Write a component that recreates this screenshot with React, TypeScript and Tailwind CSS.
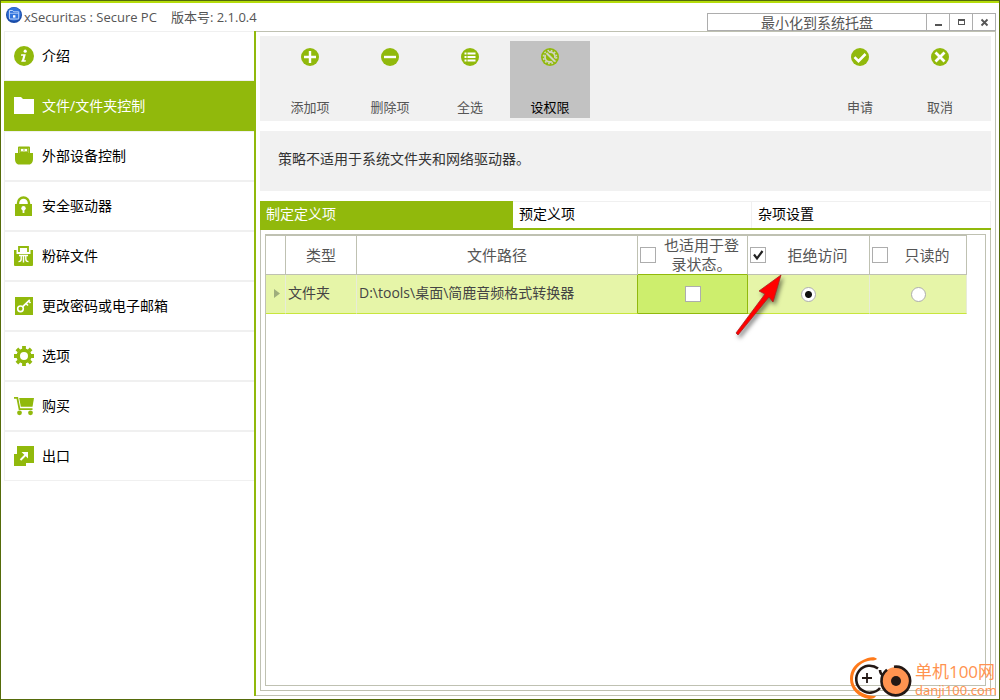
import React, { useState } from 'react';

interface MenuItem {
  label: string;
  icon: React.ReactNode;
}

interface ToolButtonProps {
  label: string;
  icon: React.ReactNode;
  active?: boolean;
}

interface CheckBoxProps {
  id?: string;
  label?: string;
  checked: boolean;
  onChange: (checked: boolean) => void;
}

const GREEN = '#91b90c';

const menuItems: MenuItem[] = [
  {
    label: '介绍',
    icon: (
      <>
        <circle cx="10" cy="10" r="10" fill={GREEN} />
        <circle cx="11.2" cy="5.2" r="1.6" fill="#fff" />
        <path d="M7.2 8.2h4.6l-1.6 6h1.8l-.4 1.6H7.2l.4-1.6h.4l1.2-4.4H6.9z" fill="#fff" />
      </>
    ),
  },
  {
    label: '文件/文件夹控制',
    icon: <path d="M0 1h7l2 2h11v15H0z" fill="#fff" />,
  },
  {
    label: '外部设备控制',
    icon: (
      <>
        <path d="M4 1.500a1 1 0 0 1 1-1h10a1 1 0 0 1 1 1V7h3v6c0 3-1.500 5.500-4 5.500H5C2.500 18.500 1 16 1 13V7h3z" fill={GREEN} />
        <path d="M5.500 2h9v5h-9z" fill="#fff" />
        <path d="M6.500 2H9v3.500H6.500zM11 2h2.500v3.500H11z" fill={GREEN} />
        <path d="M7 2.500h2.500V5H7zM10.500 2.500H13V5h-2.500z" fill="#fff" />
        <path d="M5.500 2h9v.7h-9zM5.500 5.800h9V7h-9zM9.600 2h.8v5h-.8zM5.500 2h1.200v5H5.500zM13.300 2h1.200v5h-1.200z" fill={GREEN} />
      </>
    ),
  },
  {
    label: '安全驱动器',
    icon: (
      <>
        <path d="M4 9V7a5.500 5.500 0 0 1 11 0v2" fill="none" stroke={GREEN} strokeWidth="2.400" />
        <path d="M1 8h17v12H1z" fill={GREEN} />
        <circle cx="9.500" cy="12.200" r="2.200" fill="#fff" />
        <path d="M8.600 13h1.800v4H8.600z" fill="#fff" />
      </>
    ),
  },
  {
    label: '粉碎文件',
    icon: (
      <>
        <path d="M0 4h2.500v4h14V4H19v15a1 1 0 0 1-1 1H1a1 1 0 0 1-1-1z" fill={GREEN} />
        <path d="M5 6V1h9v5" fill="none" stroke={GREEN} strokeWidth="1.800" />
        <path d="M5 9.500h9M7.200 10v3c0 1.800-.8 2.600-2.700 2.600M9.500 10v6.500M11.800 10v3c0 1.800.8 2.600 2.700 2.600" fill="none" stroke="#fff" strokeWidth="1.400" />
      </>
    ),
  },
  {
    label: '更改密码或电子邮箱',
    icon: (
      <>
        <path d="M1 1h18v18H1z" fill={GREEN} />
        <circle cx="6.500" cy="12.800" r="2.800" fill="none" stroke="#fff" strokeWidth="1.600" />
        <path d="M8.500 10.800 15.800 3.800M12 7.500l2 2M14.500 5l2 2" fill="none" stroke="#fff" strokeWidth="1.700" />
      </>
    ),
  },
  {
    label: '选项',
    icon: (
      <>
        <circle cx="10" cy="10" r="5.800" fill="none" stroke={GREEN} strokeWidth="3.600" />
        <path
          d="M10 0v3M10 17v3M0 10h3M17 10h3M2.900 2.900 5 5M15 15l2.100 2.100M2.900 17.100 5 15M15 5l2.100-2.100"
          stroke={GREEN}
          strokeWidth="3.800"
        />
      </>
    ),
  },
  {
    label: '购买',
    icon: (
      <>
        <path d="M0 1.800h3.300l2.200 11.400h13" fill="none" stroke={GREEN} strokeWidth="1.800" />
        <path d="M5.200 2H20l-1.500 8.800H6.800z" fill={GREEN} />
        <circle cx="5.500" cy="16.800" r="2.400" fill={GREEN} />
        <circle cx="16.500" cy="16.800" r="2.400" fill={GREEN} />
      </>
    ),
  },
  {
    label: '出口',
    icon: (
      <>
        <path d="M3 0h17v17h-8v3H0V8h3z" fill={GREEN} />
        <path d="M6.500 14 12.500 8" stroke="#fff" strokeWidth="2" />
        <path d="M7.500 6H14v6.500l-2-2-2.500-2.500z" fill="#fff" />
      </>
    ),
  },
];

const AddIcon = () => (
  <svg viewBox="0 0 18 18" className="h-[18px] w-[18px]" aria-hidden="true">
    <circle cx="9" cy="9" r="9" fill={GREEN} />
    <path d="M9 3v12M3 9h12" stroke="#fff" strokeWidth="2.400" />
  </svg>
);

const RemoveIcon = () => (
  <svg viewBox="0 0 18 18" className="h-[18px] w-[18px]" aria-hidden="true">
    <circle cx="9" cy="9" r="9" fill={GREEN} />
    <path d="M3 9h12" stroke="#fff" strokeWidth="2.400" />
  </svg>
);

const ListIcon = () => (
  <svg viewBox="0 0 18 18" className="h-[18px] w-[18px]" aria-hidden="true">
    <circle cx="9" cy="9" r="9" fill={GREEN} />
    <path d="M3.500 5.500h2M3.500 9h2M3.500 12.500h2M6.500 5.500h8M6.500 9h8M6.500 12.500h8" stroke="#fff" strokeWidth="1.800" />
  </svg>
);

const PermissionIcon = () => (
  <svg viewBox="0 0 18 18" className="h-[18px] w-[18px]" aria-hidden="true">
    <circle cx="9" cy="9" r="9" fill={GREEN} />
    <circle cx="9" cy="9" r="5" fill="none" stroke="#d0d4c0" strokeWidth="1.800" />
    <circle cx="9" cy="9" r="6.500" fill="none" stroke="#d0d4c0" strokeWidth="1.700" strokeDasharray="1.700 1.700" />
    <path d="m5 4.500 9 9" stroke={GREEN} strokeWidth="4" />
    <path d="m5.500 5 8.500 8.500" stroke="#d0d4c0" strokeWidth="2" />
  </svg>
);

const ApplyIcon = () => (
  <svg viewBox="0 0 18 18" className="h-[18px] w-[18px]" aria-hidden="true">
    <circle cx="9" cy="9" r="9" fill={GREEN} />
    <path d="m3.500 9.200 4 4L14.500 6" fill="none" stroke="#fff" strokeWidth="2.600" />
  </svg>
);

const CancelIcon = () => (
  <svg viewBox="0 0 18 18" className="h-[18px] w-[18px]" aria-hidden="true">
    <circle cx="9" cy="9" r="9" fill={GREEN} />
    <path d="m4.500 4.500 9 9M13.500 4.500l-9 9" stroke="#fff" strokeWidth="2.800" />
  </svg>
);

const AppLogo = () => (
  <svg viewBox="0 0 16 16" className="h-4 w-4" aria-hidden="true">
    <circle cx="8" cy="8" r="8" fill="#1b4da8" />
    <circle cx="8" cy="7" r="6.800" fill="#3273dc" />
    <path d="M3.500 3.500h3.200l1 1.300h5V12H3.500z" fill="#3273dc" stroke="#b9d2fb" strokeWidth="1" />
    <path d="M4 6.300h8.500" stroke="#b9d2fb" strokeWidth="0.800" />
    <path d="M7 8.200h2.400v2.400H7z" fill="#fff" />
  </svg>
);

const ToolButton: React.FC<ToolButtonProps> = ({ label, icon, active = false }) => (
  <button
    type="button"
    className={`flex h-[77px] w-20 flex-col items-center justify-between pt-[7px] pb-px text-[13px] leading-5 ${
      active ? 'bg-[#c2c2c2] text-black' : 'text-[#555]'
    }`}
  >
    {icon}
    <span>{label}</span>
  </button>
);

const CheckBox: React.FC<CheckBoxProps> = ({ id, label, checked, onChange }) => (
  <span className="inline-grid shrink-0 place-items-center align-middle">
    <input
      id={id}
      type="checkbox"
      aria-label={label}
      checked={checked}
      onChange={(e) => onChange(e.target.checked)}
      className="col-start-1 row-start-1 h-4 w-4 appearance-none border border-[#adadad] bg-white"
    />
    {checked && (
      <svg viewBox="0 0 16 16" className="pointer-events-none col-start-1 row-start-1 h-4 w-4" aria-hidden="true">
        <path d="m4 7.500 3 4L12.500 4" fill="none" stroke="#222" strokeWidth="2.200" />
      </svg>
    )}
  </span>
);

const App: React.FC = () => {
  const [selected, setSelected] = useState(1);
  const [loginAll, setLoginAll] = useState(false);
  const [denyAll, setDenyAll] = useState(true);
  const [readAll, setReadAll] = useState(false);
  const [login, setLogin] = useState(false);
  const [access, setAccess] = useState('deny');

  const radioClass =
    'h-[15px] w-[15px] appearance-none rounded-full border border-[#adadad] bg-white align-middle checked:bg-[radial-gradient(circle,#111_0_3px,white_4px)]';

  return (
    <div className="relative flex h-screen min-h-[520px] flex-col border border-[#556b0a] bg-white font-['Open_Sans','Noto_Sans_CJK_SC',sans-serif] text-sm text-black">
      <div className="h-0.5 shrink-0 bg-[#b4dc0a]" />

      {/* Title bar */}
      <header className="flex h-7 shrink-0 items-end justify-between pr-[3px] pl-[5px]">
        <div className="flex h-7 items-center pb-1 text-[13px] text-[#555]">
          <AppLogo />
          <h1 className="ml-0.5 pt-1">xSecuritas : Secure PC</h1>
          <span className="ml-3.5 pt-1">版本号: 2.1.0.4</span>
        </div>
        <div className="flex h-[18px] divide-x divide-[#adadad] border border-[#adadad] text-[#555]">
          <button type="button" className="flex w-[219px] items-center justify-center pt-0.5 leading-[14px]">
            最小化到系统托盘
          </button>
          <button type="button" aria-label="最小化" className="flex w-[23px] items-center justify-center">
            <svg viewBox="0 0 9 9" className="h-[9px] w-[9px]"><path d="M1 6h7v2H1z" fill="#555" /></svg>
          </button>
          <button type="button" aria-label="最大化" className="flex w-[23px] items-center justify-center">
            <svg viewBox="0 0 9 9" className="h-[9px] w-[9px]"><path d="M1 1h7v6H1zM2 3v3h5V3z" fill="#555" fillRule="evenodd" /></svg>
          </button>
          <button type="button" aria-label="关闭" className="flex w-[22px] items-center justify-center">
            <svg viewBox="0 0 9 9" className="h-[9px] w-[9px]"><path d="m1.500 1.500 6 6M7.500 1.500l-6 6" stroke="#555" strokeWidth="1.800" /></svg>
          </button>
        </div>
      </header>

      <div className="flex min-h-0 flex-1 pr-[3px] pb-[3px] pl-[3px]">
        {/* Sidebar */}
        <nav className="w-[252px] shrink-0 border-r-2 border-[#91b90c]">
          {menuItems.map((item, index) => (
            <button
              key={item.label}
              type="button"
              onClick={() => setSelected(index)}
              className={`flex h-[50px] w-full items-center gap-2 border-y border-l pl-[9px] text-left ${
                selected === index ? 'border-[#91b90c] bg-[#91b90c] text-white' : 'border-[#f0f0f0]'
              }`}
            >
              <svg viewBox="0 0 20 20" className="h-5 w-5" aria-hidden="true">{item.icon}</svg>
              <span>{item.label}</span>
            </button>
          ))}
        </nav>

        <main className="flex min-w-0 flex-1 flex-col border-y border-r border-[#bfc1b2] p-1">
          {/* Toolbar */}
          <div className="flex h-[85px] shrink-0 justify-between bg-[#f1f1f1] pt-[5px] pr-[11px] pl-2.5">
            <div className="flex">
              <ToolButton label="添加项" icon={<AddIcon />} />
              <ToolButton label="删除项" icon={<RemoveIcon />} />
              <ToolButton label="全选" icon={<ListIcon />} />
              <ToolButton label="设权限" icon={<PermissionIcon />} active />
            </div>
            <div className="flex">
              <ToolButton label="申请" icon={<ApplyIcon />} />
              <ToolButton label="取消" icon={<CancelIcon />} />
            </div>
          </div>

          <p className="my-2.5 flex h-[60px] shrink-0 items-center bg-[#f1f1f1] px-[18px] pb-1 text-[#333]">
            策略不适用于系统文件夹和网络驱动器。
          </p>

          {/* Tabs */}
          <div role="tablist" className="flex h-[29px] shrink-0 border-b-2 border-[#91b90c]">
            <button type="button" role="tab" aria-selected="true" className="w-[253px] bg-[#91b90c] px-1.5 pb-0.5 text-left text-white">
              制定定义项
            </button>
            <button type="button" role="tab" aria-selected="false" className="flex-1 border-t border-r border-[#f0f0f0] px-1.5 pb-0.5 text-left">
              预定义项
            </button>
            <button type="button" role="tab" aria-selected="false" className="flex-1 border-t border-r border-[#f0f0f0] px-1.5 pb-0.5 text-left">
              杂项设置
            </button>
          </div>

          <div className="flex min-h-0 flex-1 border-x border-b border-[#bfc1b2] p-1">
            <div className="min-w-0 flex-1 border border-[#bfc1b2] pr-[18px]">
              <table className="w-full table-fixed border-separate border-spacing-0 text-[#444]">
                <colgroup>
                  <col className="w-5" />
                  <col className="w-[71px]" />
                  <col />
                  <col className="w-[110px]" />
                  <col className="w-[122px]" />
                  <col className="w-[97px]" />
                </colgroup>
                <thead>
                  <tr className="h-10 text-[15px] leading-[19px] text-[#555] [&>th]:border-t [&>th]:border-r [&>th]:border-b [&>th]:border-[#bfc1b2] [&>th]:p-0 [&>th]:font-normal">
                    <th aria-label="展开" />
                    <th>类型</th>
                    <th>文件路径</th>
                    <th className="border-b-[#91b90c]!">
                      <div className="flex items-center pl-0.5">
                        <CheckBox id="login-all" checked={loginAll} onChange={setLoginAll} />
                        <label htmlFor="login-all" className="flex-1 px-1">也适用于登录状态。</label>
                      </div>
                    </th>
                    <th>
                      <div className="flex items-center pl-0.5">
                        <CheckBox id="deny-all" checked={denyAll} onChange={setDenyAll} />
                        <label htmlFor="deny-all" className="flex-1">拒绝访问</label>
                      </div>
                    </th>
                    <th>
                      <div className="flex items-center pl-0.5">
                        <CheckBox id="read-all" checked={readAll} onChange={setReadAll} />
                        <label htmlFor="read-all" className="flex-1">只读的</label>
                      </div>
                    </th>
                  </tr>
                </thead>
                <tbody>
                  <tr className="h-[39px] bg-[#e6f5a8] [&>td]:border-r [&>td]:border-b [&>td]:border-r-[#e8ecd8] [&>td]:border-b-[#c8e63c] [&>td]:p-0 [&>td]:pb-0.5">
                    <td>
                      <svg viewBox="0 0 6 9" className="ml-2 h-[9px] w-1.5" aria-hidden="true"><path d="M0 0v9l6-4.500z" fill="#9fae7c" /></svg>
                    </td>
                    <td><span className="pl-0.5">文件夹</span></td>
                    <td className="border-r-[#91b90c]!"><span className="block truncate pl-0.5">D:\tools\桌面\简鹿音频格式转换器</span></td>
                    <td className="border-r-[#91b90c]! border-b-[#91b90c]! bg-[#cdee6d] text-center">
                      <CheckBox label="也适用于登录状态。" checked={login} onChange={setLogin} />
                    </td>
                    <td className="text-center">
                      <input type="radio" name="access" aria-label="拒绝访问" checked={access === 'deny'} onChange={() => setAccess('deny')} className={radioClass} />
                    </td>
                    <td className="text-center">
                      <input type="radio" name="access" aria-label="只读的" checked={access === 'read'} onChange={() => setAccess('read')} className={radioClass} />
                    </td>
                  </tr>
                </tbody>
              </table>
            </div>
          </div>
        </main>
      </div>

      {/* Arrow pointing at the deny column */}
      <svg viewBox="0 0 56 70" className="pointer-events-none absolute top-[270px] right-[208px] h-[70px] w-14 drop-shadow-[2px_3px_2px_rgba(0,0,0,0.5)]" aria-hidden="true">
        <path d="M46 4 24 20l6 3L1 62l2 2 31-38 4 5z" fill="#f00" stroke="#a22" strokeWidth="0.800" />
      </svg>

      {/* Watermark */}
      <div className="pointer-events-none absolute right-0.5 bottom-0 flex items-end gap-0.5 text-[#ff9350]">
        <svg viewBox="0 0 64 42" className="h-[42px] w-16" aria-hidden="true">
          <path d="M28 2C26-1 19 0 14 3 5 7 1 14 1 22c0 10 8 18 19 20 4 0 6-1 7-3C14 39 4 32 4 22 4 14 10 6 19 4c4-1 7 0 9-2z" fill="#ff7a1a" />
          <path d="M29 11.500A13.500 13.500 0 1 0 31 31" fill="none" stroke="#231815" strokeWidth="2.600" />
          <path d="M31 13c0 3 2 5 4 6l3-6" fill="none" stroke="#231815" strokeWidth="2.600" />
          <circle cx="47" cy="24" r="14" fill="#ff9350" />
          <path d="M45 9.800A14.300 14.300 0 1 1 38 12.700" fill="none" stroke="#231815" strokeWidth="2.600" />
          <path d="M18 16v10M13 21h10" stroke="#231815" strokeWidth="1.800" />
          <circle cx="47" cy="24" r="5" fill="#231815" />
        </svg>
        <div>
          <div className="text-[17px] leading-[20px]">单机100网</div>
          <div className="font-['Noto_Sans',sans-serif] text-[13px] leading-[17px]">danji100.com</div>
        </div>
      </div>
    </div>
  );
};

export default App;
